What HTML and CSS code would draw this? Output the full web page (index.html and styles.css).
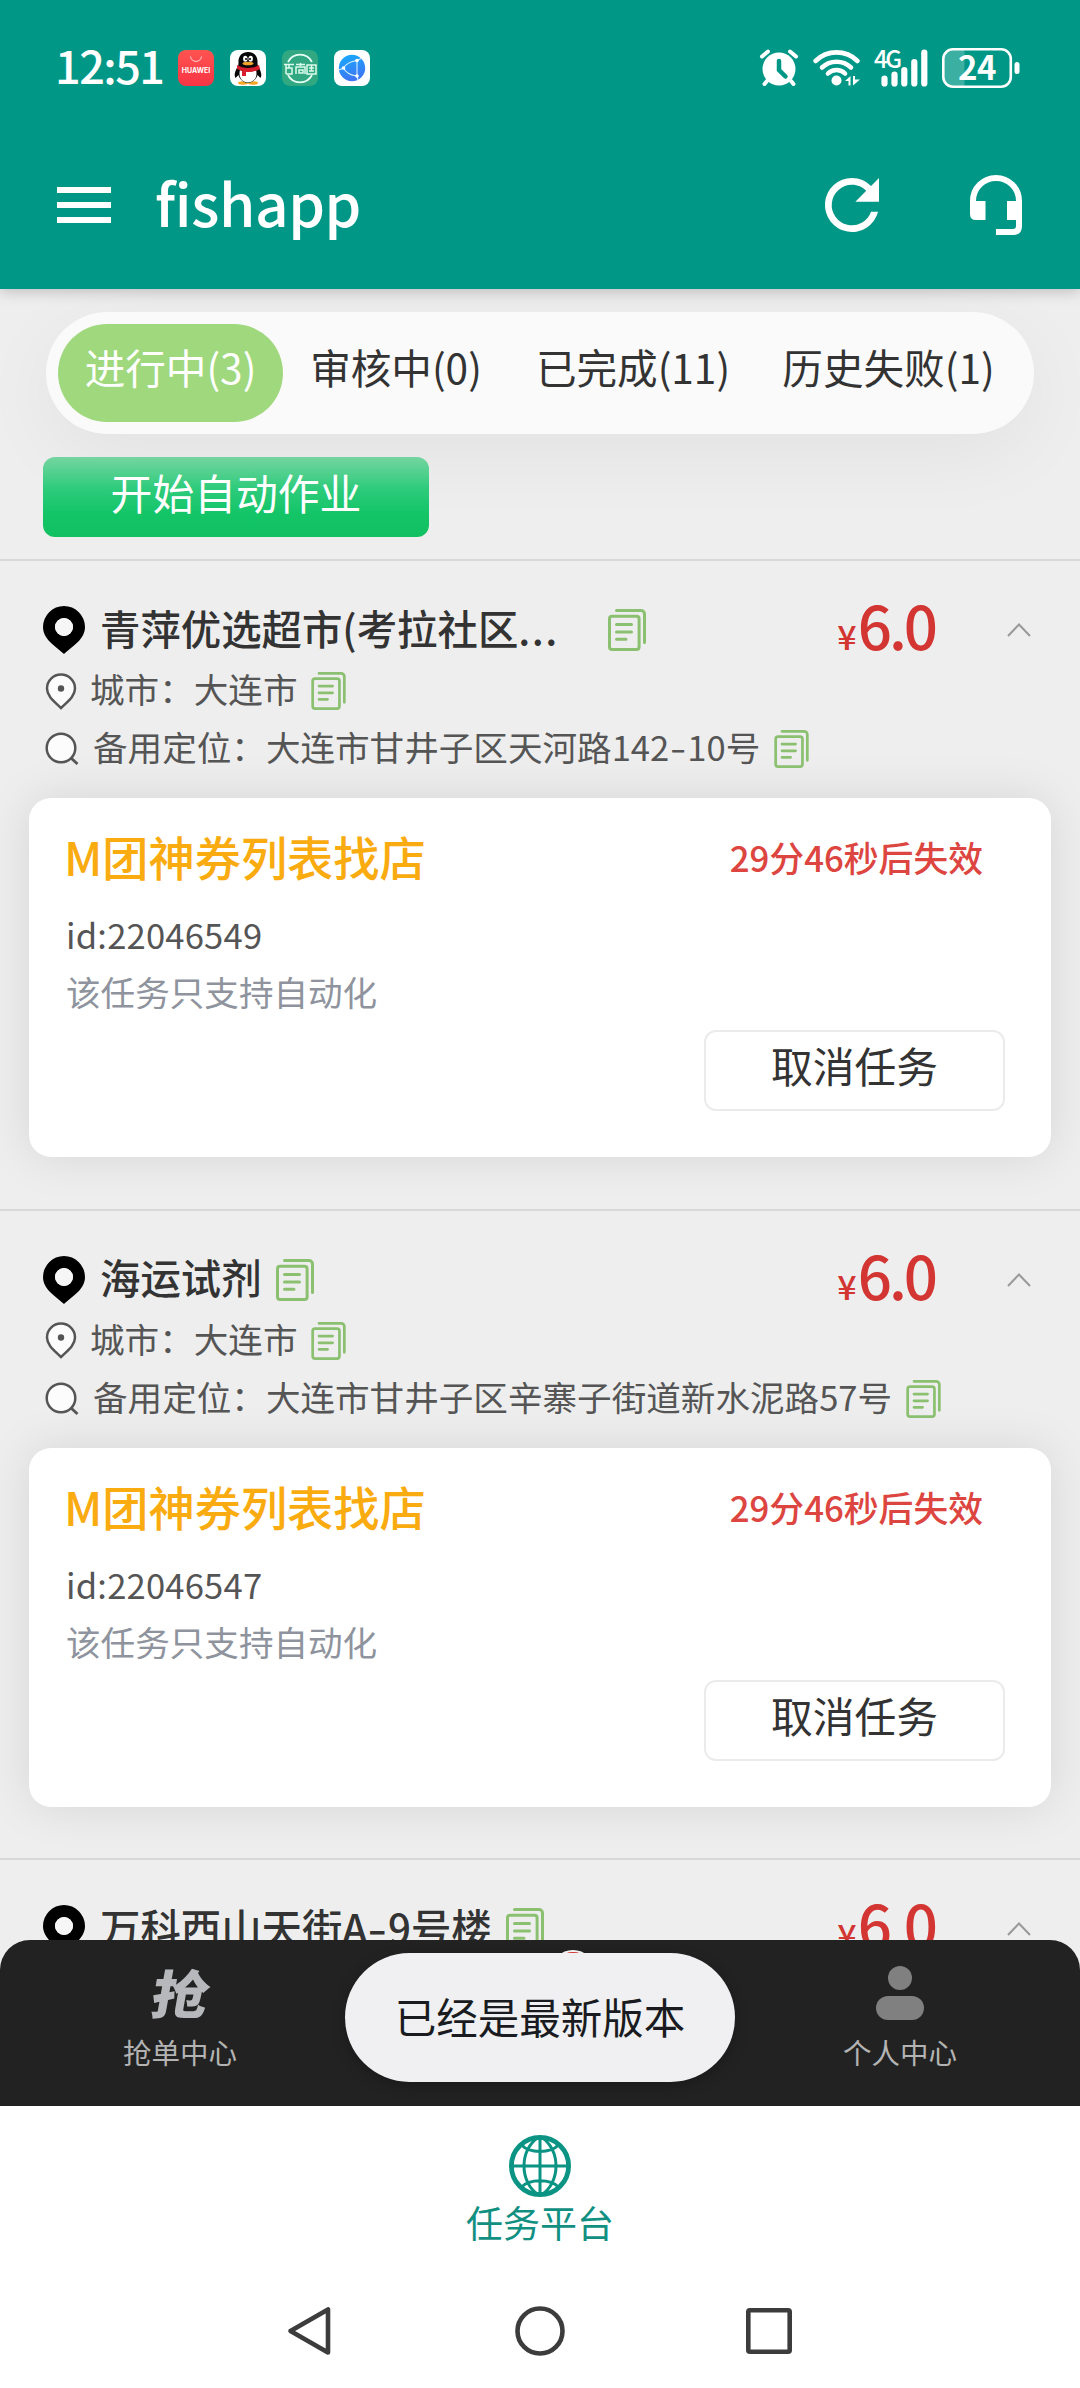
FILE: index.html
```html
<!DOCTYPE html>
<html lang="zh-CN">
<head>
<meta charset="utf-8">
<title>fishapp</title>
<link rel="stylesheet" href="styles.css">
</head>
<body>
<svg class="defs" aria-hidden="true">
  <symbol id="copy" viewBox="0 0 38 42"><path d="M8.500 1.500H33a3.500 3.500 0 0 1 3.500 3.500v28.500" stroke-linecap="round"/><rect x="1.500" y="7.300" width="29.600" height="33.200" rx="2.600"/><path d="M8.500 15.500h15M8.500 23h15M8.500 30.200h9.500" stroke-linecap="round"/></symbol>
  <symbol id="pin" viewBox="0 0 42 48"><path fill="#000" fill-rule="evenodd" d="M21 0a21 21 0 0 1 21 21c0 12-12 19-21 27C12 40 0 33 0 21A21 21 0 0 1 21 0zm0 12a9 9 0 1 0 0 18 9 9 0 0 0 0-18z"/><circle cx="21" cy="21" r="9" fill="#f6f6f6"/></symbol>
  <symbol id="place" viewBox="0 0 32 37"><path d="M16 1.500a14 14 0 0 1 14 14c0 8-8 13.500-14 19.500C10 29 2 23.500 2 15.500a14 14 0 0 1 14-14z" fill="#fcfcfc" stroke="#555" stroke-width="2.500"/><circle cx="16" cy="15.500" r="3.200" fill="#555"/></symbol>
  <symbol id="search" viewBox="0 0 34 34"><circle cx="16" cy="16" r="14.300" fill="#fcfcfc" stroke="#555" stroke-width="2.500"/><path d="M26 26l6.500 6" stroke="#555" stroke-width="2.800"/></symbol>
  <symbol id="up" viewBox="0 0 24 14"><path d="M1 13L12 1.500 23 13" fill="none" stroke="#999" stroke-width="2"/></symbol>
</svg>
<div class="screen">
  <header class="header">
    <div class="status">
      <span class="clock">12:51</span>
      <div class="apps">
        <svg viewBox="0 0 36 36"><defs><linearGradient id="hw" x2="0" y2="1"><stop stop-color="#ff5450"/><stop offset="1" stop-color="#f93445"/></linearGradient></defs><rect width="36" height="36" rx="8" fill="url(#hw)"/><path d="M12.500 6.500c.5 6.500 10.500 6.500 11 0" fill="none" stroke="#ffd9d9" stroke-width="1"/><text x="18" y="23" class="hw-text">HUAWEI</text></svg>
        <svg viewBox="0 0 36 36"><rect width="36" height="36" rx="8" fill="#fff"/><ellipse cx="13" cy="33" rx="5" ry="1.700" fill="#f6a623"/><ellipse cx="23" cy="33" rx="5" ry="1.700" fill="#f6a623"/><path d="M18 2c-6 0-10 4-9.500 11 0 2-.5 3-1 4-3 5-3.500 9-2 11l3-3c1 4 5 8 9.500 8s8.500-4 9.500-8l3 3c1.500-2 1-6-2-11-.5-1-1-2-1-4C28 6 24 2 18 2z" fill="#080808"/><path d="M10 20c3 2 13 2 16 0 2 7-2 12.500-8 12.500S8 27 10 20z" fill="#fff"/><ellipse cx="15.300" cy="8.700" rx="2.200" ry="3" fill="#fff"/><ellipse cx="20.700" cy="8.700" rx="2.200" ry="3" fill="#fff"/><circle cx="16" cy="9" r="1"/><circle cx="20" cy="9" r="1"/><ellipse cx="18" cy="13.500" rx="5.500" ry="1.800" fill="#f3a42c"/><path d="M7 15c6 4 16 4 22 0l1 4c-4 2.500-10 3.300-14 3v4h-4v-5l-5-2z" fill="#d81e2e"/></svg>
        <svg viewBox="0 0 36 36"><rect width="36" height="36" rx="8" fill="#31a882"/><path d="M6 12a13.500 13.500 0 0 1 24 0M6 25a13.500 13.500 0 0 0 24 0" fill="none" stroke="#e8fff4" stroke-width="1.700"/><path d="M2 14.500h10M4 14.500v9.500M4 18h6v6H4M14 14.500h9M18.500 13v3M14 24v-7h9v7M17 20h4v3h-4zM25 15h9v9h-9zM27 18h5M27 21h5M29.500 15v6M7 14v4" fill="none" stroke="#dcfbed" stroke-width="1.500"/></svg>
        <svg viewBox="0 0 36 36"><defs><linearGradient id="br" x2="0.300" y2="1"><stop stop-color="#14adfd"/><stop offset="1" stop-color="#3e76f5"/></linearGradient></defs><rect width="36" height="36" rx="8" fill="#fff"/><circle cx="18" cy="18" r="13.200" fill="url(#br)"/><path d="M9.500 18Q13 12 23 10.500M9.500 18Q13 25 23 26M23 10.500V26M5 20l4.500-2M23 10.500l4-2M23 26l1 4" fill="none" stroke="#d6efff" stroke-width="1.100"/><circle cx="9.500" cy="18" r="1.800" fill="#fff"/><circle cx="23" cy="10.500" r="1.800" fill="#fff"/><circle cx="23" cy="26" r="1.800" fill="#fff"/></svg>
      </div>
      <div class="signals">
        <svg class="alarm" viewBox="0 0 38 37"><circle cx="19" cy="20" r="16.500" fill="#fff"/><path d="M2 7.500l6-5M36 7.500l-6-5M7 32l-2.500 3M31 32l2.500 3" stroke="#fff" stroke-width="4" stroke-linecap="round"/><path d="M19 12v9l6.500 6.500" fill="none" stroke="#009787" stroke-width="4.500" stroke-linecap="round"/></svg>
        <svg class="wifi" viewBox="0 0 48 37"><g fill="none" stroke="#fff" stroke-width="4.600" stroke-linecap="round"><path d="M2.500 12a30 30 0 0 1 42 0M9 18.500a21 21 0 0 1 29 0M15 24.500a12 12 0 0 1 17 0"/></g><circle cx="23.500" cy="31.500" r="5" fill="#fff"/><path d="M37.500 27v9.500h-2V32H32zM40 36.500V27h2v3.500h5z" fill="#fff"/></svg>
        <svg class="cell" viewBox="0 0 55 38"><text x="0" y="19" class="net">4G</text><path d="M10.500 29.500v5M20.500 25.500v9M30.300 21v13.500M40.300 13v21.500M50.300 3.500v31" stroke="#fff" stroke-width="6.200" stroke-linecap="round"/></svg>
        <svg class="battery" viewBox="0 0 78 40"><path d="M11 1.300h11.500v37.400H11a9.700 9.700 0 0 1-9.700-9.700V11A9.700 9.700 0 0 1 11 1.300z" fill="#fff" opacity=".23"/><rect x="1.300" y="1.300" width="67.500" height="37.400" rx="9.700" fill="none" stroke="#fff" stroke-width="2.600"/><rect x="72.500" y="14" width="5" height="12" rx="2.500" fill="#fff"/><text x="35" y="32" class="charge">24</text></svg>
      </div>
    </div>
    <div class="appbar">
      <svg class="menu" viewBox="0 0 54 36"><path d="M0 3h54M0 18h54M0 33h54" stroke="#fff" stroke-width="6"/></svg>
      <h1>fishapp</h1>
      <svg class="refresh" viewBox="4 4 16 16"><path fill="#fff" d="M17.650 6.350A7.950 7.950 0 0 0 12 4a8 8 0 1 0 7.730 10h-2.080A6 6 0 1 1 12 6c1.660 0 3.140.69 4.220 1.780L13 11h7V4z"/></svg>
      <svg class="headset" viewBox="0 0 52 60"><path fill="none" stroke="#fff" stroke-width="6" d="M3 27v-1a23 23 0 0 1 46 0v25q0 6-6 6H26"/><path d="M0 26h15.500v19H6q-6 0-6-6zM37 26h15v19H37z" fill="#fff"/></svg>
    </div>
  </header>
  <main class="content">
    <nav class="tabs"><span class="tab active">进行中(3)</span><span class="tab">审核中(0)</span><span class="tab">已完成(11)</span><span class="tab">历史失败(1)</span></nav>
    <button class="start">开始自动作业</button>
    <section class="task">
      <div class="shop"><svg class="pin"><use href="#pin"/></svg><h2 class="long">青萍优选超市(考拉社区<span class="dots">...</span></h2><svg class="copy big"><use href="#copy"/></svg><span class="price"><small>¥</small>6.0</span><svg class="up"><use href="#up"/></svg></div>
      <div class="row city"><svg class="place"><use href="#place"/></svg><span>城市：大连市</span><svg class="copy"><use href="#copy"/></svg></div>
      <div class="row backup"><svg class="search"><use href="#search"/></svg><span>备用定位：大连市甘井子区天河路142<b class="dash">-</b>10号</span><svg class="copy"><use href="#copy"/></svg></div>
      <article class="card">
        <div class="card-head"><h3>M团神券列表找店</h3><span class="expiry">29分46秒后失效</span></div>
        <p class="id">id:22046549</p>
        <p class="note">该任务只支持自动化</p>
        <button class="cancel">取消任务</button>
      </article>
    </section>
    <section class="task">
      <div class="shop"><svg class="pin"><use href="#pin"/></svg><h2>海运试剂</h2><svg class="copy big"><use href="#copy"/></svg><span class="price"><small>¥</small>6.0</span><svg class="up"><use href="#up"/></svg></div>
      <div class="row city"><svg class="place"><use href="#place"/></svg><span>城市：大连市</span><svg class="copy"><use href="#copy"/></svg></div>
      <div class="row backup"><svg class="search"><use href="#search"/></svg><span>备用定位：大连市甘井子区辛寨子街道新水泥路57号</span><svg class="copy"><use href="#copy"/></svg></div>
      <article class="card">
        <div class="card-head"><h3>M团神券列表找店</h3><span class="expiry">29分46秒后失效</span></div>
        <p class="id">id:22046547</p>
        <p class="note">该任务只支持自动化</p>
        <button class="cancel">取消任务</button>
      </article>
    </section>
    <section class="task">
      <div class="shop"><svg class="pin"><use href="#pin"/></svg><h2>万科西山天街A<b class="dash">-</b>9号楼</h2><svg class="copy big"><use href="#copy"/></svg><span class="price"><small>¥</small>6.0</span><svg class="up"><use href="#up"/></svg></div>
    </section>
  </main>
  <nav class="dock">
    <div class="dock-item"><span class="grab">抢</span><span>抢单中心</span></div>
    <div class="dock-item"></div>
    <div class="dock-item"><svg class="person" viewBox="0 0 48 54"><circle cx="24" cy="12" r="12" fill="#808080"/><rect y="30" width="48" height="24" rx="12" fill="#808080"/></svg><span>个人中心</span></div>
    <i class="badge"></i>
    <div class="toast">已经是最新版本</div>
  </nav>
  <div class="platform">
    <svg class="globe" viewBox="0 0 62 62"><g fill="none" stroke="#0b9384"><circle cx="31" cy="31" r="28.600" stroke-width="4.800"/><path stroke-width="3" d="M31 2v58M3 31h56M30 2C10 14 10 48 30 60M32 2c20 12 20 46 0 58M12.500 10c8 8.500 29 8.500 37 0M12.500 52c8-8.500 29-8.500 37 0"/></g></svg>
    <span>任务平台</span>
  </div>
  <footer class="keys">
    <svg viewBox="0 0 50 50"><path d="M42 3.500v43L4.500 25z"/></svg>
    <svg viewBox="0 0 50 50"><circle cx="25" cy="25" r="22.500"/></svg>
    <svg viewBox="0 0 50 50"><rect x="4.300" y="4.300" width="41.400" height="41.400" rx="1.500"/></svg>
  </footer>
</div>
</body>
</html>
```
FILE: styles.css
```css
* { box-sizing: border-box; }
body, h1, h2, h3, p { margin: 0; }
body { font-family: "Noto Sans CJK SC", sans-serif; color: #333; background: #fff; }
button { font-family: inherit; padding: 0; border: 0; }
svg { display: block; flex: none; overflow: visible; }
.defs { position: absolute; width: 0; height: 0; }
.screen { width: 1080px; height: 2388px; display: flex; flex-direction: column; overflow: hidden; }

.header { position: relative; z-index: 1; height: 289px; flex: none; background: #009787; color: #fff; box-shadow: 0 2px 14px rgba(0,0,0,.22); }
.status { height: 137px; padding: 0 60px 2px 55px; display: flex; align-items: center; }
.clock { width: 123px; margin-bottom: 5px; font-size: 45px; font-weight: 500; line-height: 60px; letter-spacing: -1.500px; white-space: nowrap; }
.apps { display: flex; gap: 16px; }
.apps svg { width: 36px; height: 36px; }
.hw-text { font: 700 7px Inter, sans-serif; fill: #fff; text-anchor: middle; }
.signals { margin-left: auto; display: flex; align-items: center; }
.alarm { width: 38px; height: 37px; margin-right: 15px; }
.wifi { width: 48px; height: 37px; margin-right: 13px; }
.cell { width: 55px; height: 38px; margin-right: 13px; }
.battery { width: 78px; height: 40px; }
.net { font: 500 24px "Noto Sans CJK SC", sans-serif; fill: #fff; letter-spacing: -2.500px; }
.charge { font: 700 33px "Noto Sans CJK SC", sans-serif; fill: #fff; text-anchor: middle; letter-spacing: -.5px; }
.appbar { height: 136px; padding: 0 58px 0 57px; display: flex; align-items: center; }
.menu { width: 54px; height: 36px; }
h1 { margin: 0 0 6px 44px; font-size: 58.500px; font-weight: 500; line-height: 80px; letter-spacing: -.4px; }
.refresh { width: 54px; height: 54px; margin-left: auto; }
.headset { width: 52px; height: 60px; margin-left: 91px; }

.content { height: 1817px; flex: none; overflow: hidden; padding-top: 23px; background: #eee; }
.tabs { width: 988px; height: 122px; margin: 0 0 23px 46px; padding: 12px; display: flex; border-radius: 61px; background: #fafafa; font-size: 40.600px; line-height: 85px; box-shadow: 0 20px 80px rgba(0,0,0,.05); }
.tab { height: 98px; text-align: center; white-space: nowrap; }
.tab:nth-child(1) { width: 225px; border-radius: 49px; background: #a0d87e; color: #fff; }
.tab:nth-child(2) { width: 226px; }
.tab:nth-child(3) { width: 248px; }
.tab:nth-child(4) { width: 263px; }
.start { display: block; width: 386px; height: 80px; margin-left: 43px; padding-bottom: 9px; border-radius: 12px; background: linear-gradient(#75d5a0, #2dcb7b 40%, #14c568 70%, #10c061); color: #fff; font-size: 41.800px; line-height: 71px; }

.task { height: 649.500px; border-top: 2px solid #d8d8d8; padding-top: 45px; }
.start + .task { margin-top: 22px; }
.shop { height: 48px; padding: 0 49px 0 43px; display: flex; align-items: center; }
.pin { width: 42px; height: 48px; margin-right: 15px; }
h2 { margin-bottom: 5px; font-size: 40.400px; line-height: 46px; font-weight: 500; white-space: nowrap; }
h2.long { width: 494px; }
.dots { letter-spacing: 1.500px; }
.dash { display: inline-block; font-weight: inherit; padding: 0 2px; margin: 0 1px; transform: scaleX(1.35); }
.copy { width: 35px; height: 38px; margin-left: 14px; fill: none; stroke: #8bc070; stroke-width: 3px; }
.copy.big { width: 38px; height: 42px; }
.price { margin: 0 72px 0 auto; color: #d33632; font-size: 60px; line-height: 48px; letter-spacing: -3px; font-weight: 500; display: flex; align-items: baseline; }
.price small { font-size: 34px; font-weight: 500; letter-spacing: 1px; }
.up { width: 24px; height: 14px; }
.row { display: flex; align-items: center; color: #555; font-size: 34.600px; line-height: 40px; white-space: nowrap; padding-left: 45px; }
.row span { margin-bottom: 6px; }
.city { height: 38px; margin-top: 18px; }
.backup { height: 38px; margin-top: 20px; }
.place { width: 32px; height: 37px; margin-right: 13px; }
.search { width: 34px; height: 34px; margin-right: 14px; }
.card { width: 1022px; height: 359px; margin: 30px 0 0 29px; padding: 33px 46px 46px 35px; display: flex; flex-direction: column; border-radius: 22px; background: #fff; box-shadow: 0 0 48px rgba(0,0,0,.1); }
.card-head { height: 50px; padding-right: 22px; display: flex; align-items: center; justify-content: space-between; }
h3 { font-size: 46.200px; line-height: 50px; font-weight: 500; color: #f9ab10; }
.expiry { margin-top: 2px; font-size: 34.800px; font-weight: 500; color: #dd4540; }
.id, .note { height: 40px; padding-left: 2px; font-size: 34.600px; line-height: 40px; color: #555; }
.id { margin-top: 33px; letter-spacing: .2px; }
.note { margin-top: 17px; color: #8e939d; }
.cancel { width: 301px; height: 81px; margin: auto 0 0 auto; padding-bottom: 10px; border: 2px solid #ebebeb; border-radius: 12px; background: #fff; color: #333; font-size: 41.800px; line-height: 67px; }

.dock { position: relative; z-index: 2; height: 166px; margin-top: -166px; flex: none; display: flex; background: #222; border-radius: 30px 30px 0 0; color: #b3b3b3; font-size: 28.500px; line-height: 36px; }
.dock-item { flex: 1; display: flex; flex-direction: column; align-items: center; padding-top: 26px; }
.grab { height: 54px; margin-bottom: 14px; padding-left: 3px; font-size: 52px; line-height: 52px; font-weight: 900; color: #b6b8bb; transform: skewX(-10deg) scaleX(1.1); }
.person { width: 48px; height: 54px; margin-bottom: 14px; }
.badge { position: absolute; left: 551px; top: 10px; width: 44px; height: 44px; border: 2px solid #fff; border-radius: 50%; background: #e53935; }
.toast { position: absolute; left: 345px; top: 13px; width: 390px; height: 129px; border-radius: 65px; background: #f0f0f2; color: #191b20; font-size: 41.500px; line-height: 127px; text-align: center; box-shadow: 0 4px 14px rgba(0,0,0,.25); }
.platform { height: 155px; flex: none; padding-top: 29px; display: flex; flex-direction: column; align-items: center; color: #119082; font-size: 37px; line-height: 50px; }
.globe { width: 62px; height: 62px; }
.keys { height: 127px; padding: 13px 286px 0; display: flex; justify-content: space-between; align-items: center; }
.keys svg { width: 50px; height: 50px; fill: none; stroke: #3c3c3c; stroke-width: 4.600px; stroke-linejoin: round; }
```
